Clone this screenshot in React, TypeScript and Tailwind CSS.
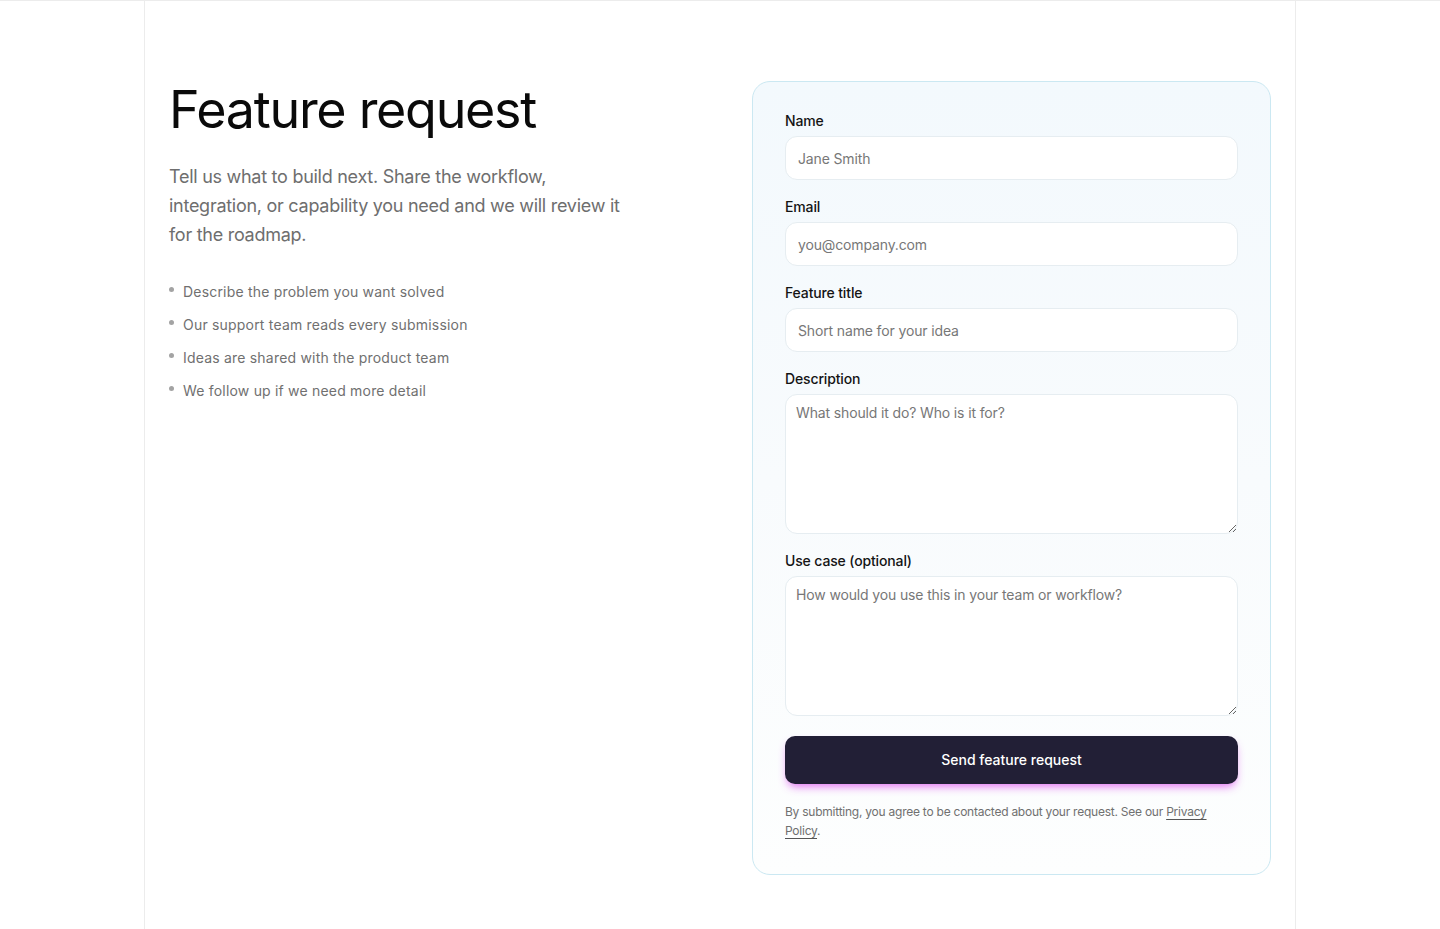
import React from 'react';

const bullets = [
  'Describe the problem you want solved',
  'Our support team reads every submission',
  'Ideas are shared with the product team',
  'We follow up if we need more detail',
];

const inputCls =
  'block w-full h-11 rounded-xl border border-[#e6edf1] bg-white px-3 text-sm tracking-[-0.01em] text-[#1a1a1a] placeholder:text-[#777777] outline-none';
const areaCls =
  'block w-full h-[140px] rounded-xl border border-[#e6edf1] bg-white px-2.5 py-2 text-sm leading-5 tracking-[-0.01em] text-[#1a1a1a] placeholder:text-[#777777] outline-none';

function Field({ label, children }: { label: string; children: React.ReactNode }) {
  return (
    <label className="flex flex-col gap-[5px]">
      <span className="text-sm leading-5 font-medium tracking-[-0.01em] text-[#141414]">{label}</span>
      {children}
    </label>
  );
}

export default function App() {
  return (
    <div className="min-h-[929px] bg-white border-t border-[#ececec] font-['Inter','Liberation_Sans',sans-serif]">
      <div className="mx-auto max-w-[1152px] min-h-[928px] border-x border-[#ececec] px-6 pt-20 pb-12">
        <div className="grid grid-cols-2 gap-16">
          <div>
            <h1 className="mt-[1px] text-[52px] leading-[56px] font-normal tracking-[-0.025em] text-[#0a0a0a]">
              Feature request
            </h1>
            <p className="mt-6 max-w-[452px] text-lg leading-[29px] text-[#6e6e6e] tracking-[-0.015em]">
              Tell us what to build next. Share the workflow, integration, or capability you need and we will review it for the roadmap.
            </p>
            <ul className="mt-[33px] flex flex-col gap-[13px]">
              {bullets.map((b) => (
                <li key={b} className="flex items-start gap-[9px] text-sm leading-5 tracking-[0.014em] text-[#707070]">
                  <span className="mt-[5px] h-[5px] w-[5px] shrink-0 rounded-full bg-[#a3a3a3]" />
                  <span>{b}</span>
                </li>
              ))}
            </ul>
          </div>

          <form
            className="rounded-[18px] border border-[#cbe8f2] bg-gradient-to-b from-[#f3f9fd] via-[#f8fbfd] to-[#fdfefe] px-8 pt-[29px] pb-[34px] flex flex-col gap-[17px]"
            onSubmit={(e) => e.preventDefault()}
          >
            <Field label="Name">
              <input className={inputCls} placeholder="Jane Smith" />
            </Field>
            <Field label="Email">
              <input className={inputCls} placeholder="you@company.com" />
            </Field>
            <Field label="Feature title">
              <input className={inputCls} placeholder="Short name for your idea" />
            </Field>
            <Field label="Description">
              <textarea className={areaCls} placeholder="What should it do? Who is it for?" />
            </Field>
            <Field label="Use case (optional)">
              <textarea className={areaCls} placeholder="How would you use this in your team or workflow?" />
            </Field>
            <div className="pt-[3px]">
              <button
                type="submit"
                className="h-12 w-full rounded-[10px] bg-[#221f36] text-sm font-medium text-white shadow-[0_5px_10px_-3px_rgba(217,70,239,0.85)]"
              >
                Send feature request
              </button>
              <p className="mt-[18px] text-xs leading-[19px] text-[#707070] tracking-[-0.02em]">
                By submitting, you agree to be contacted about your request. See our{' '}
                <a href="#" className="underline underline-offset-[3px] decoration-[#555555]">
                  Privacy Policy
                </a>
                .
              </p>
            </div>
          </form>
        </div>
      </div>
    </div>
  );
}
